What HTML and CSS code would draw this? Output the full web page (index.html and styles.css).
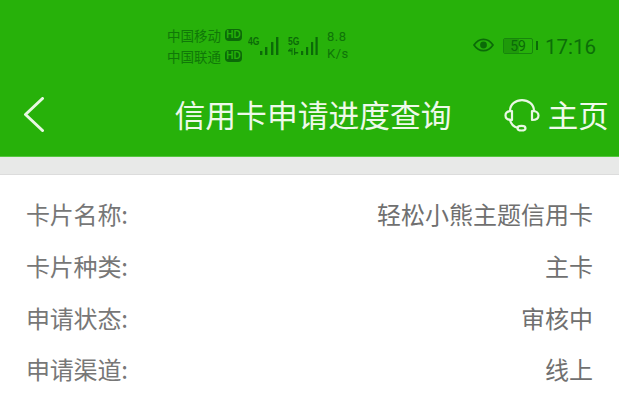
FILE: index.html
```html
<!DOCTYPE html>
<html lang="zh">
<head>
<meta charset="utf-8">
<title>信用卡申请进度查询</title>
<link rel="stylesheet" href="styles.css">
</head>
<body>
<div class="top">
  <div class="status">
    <div class="carriers">
      <div class="carrier"><span>中国移动</span><b class="hd">HD</b></div>
      <div class="carrier"><span>中国联通</span><b class="hd">HD</b></div>
    </div>
    <div class="signal">
      <span class="net">4G</span>
      <svg class="bars" width="20" height="18" viewBox="0 0 20 18"><g fill="#0b6a08"><rect x="0" y="14" width="2.400" height="4"/><rect x="5" y="10" width="2.400" height="8"/><rect x="11" y="5" width="2.400" height="13"/><rect x="16" y="0" width="2.400" height="18"/></g></svg>
    </div>
    <div class="signal second">
      <span class="net">5G</span>
      <svg class="bars wide" width="30" height="18" viewBox="0 0 30 18"><g fill="#0b6a08"><path d="M0 13.500l2.500-2.500v2h1v-2h1v7h-1v-3.500h-3.500zM6 11h1.200v4h3v1.500h-3v1.500H6z"/><rect x="13" y="14" width="2.200" height="4"/><rect x="18" y="10" width="2.200" height="8"/><rect x="23" y="5" width="2.200" height="13"/><rect x="27.500" y="0" width="2.200" height="18"/></g></svg>
    </div>
    <div class="speed"><span>8.8</span><span>K/s</span></div>
    <svg class="eye" width="21" height="14" viewBox="0 0 21 14"><path d="M1 7c2.500-3.800 5.800-5.700 9.500-5.700S17.500 3.200 20 7c-2.500 3.800-5.800 5.700-9.500 5.700S3.500 10.800 1 7z" fill="none" stroke="#0b6a08" stroke-width="1.700"/><circle cx="10.500" cy="7" r="3.400" fill="#0b6a08"/></svg>
    <div class="battery"><div class="cell"><i class="level"></i><span>59</span></div><i class="nub"></i></div>
    <div class="clock">17:16</div>
  </div>
  <div class="nav">
    <svg class="back" width="22" height="36" viewBox="0 0 22 36"><path d="M19.500 1.500 2.500 17.500l17 16" fill="none" stroke="#e9f8e4" stroke-width="3" stroke-linecap="round" stroke-linejoin="round"/></svg>
    <h1 class="title">信用卡申请进度查询</h1>
    <div class="home">
      <svg width="36" height="34" viewBox="0 0 36 34"><g fill="none" stroke="#e9f8e4" stroke-width="2.200" stroke-linecap="round" stroke-linejoin="round"><path d="M6 12C6 5 12 1.200 18 1.200S30 5 30 12"/><path d="M8 12C3.500 12 1.500 14 1.500 16.500S3.500 21 8 21Z"/><path d="M28 12C32.500 12 34.500 14 34.500 16.500S32.500 21 28 21Z"/><path d="M6 21C7 25 10 28 13.500 28.800"/><ellipse cx="17.500" cy="29.200" rx="4" ry="2.300"/></g></svg>
      <span>主页</span>
    </div>
  </div>
</div>
<div class="band"></div>
<main class="list">
  <div class="row"><span class="label">卡片名称:</span><span class="value">轻松小熊主题信用卡</span></div>
  <div class="row"><span class="label">卡片种类:</span><span class="value">主卡</span></div>
  <div class="row"><span class="label">申请状态:</span><span class="value">审核中</span></div>
  <div class="row"><span class="label">申请渠道:</span><span class="value">线上</span></div>
</main>
</body>
</html>
```
FILE: styles.css
```css
* { box-sizing: border-box; margin: 0; padding: 0; }
html, body { height: 100%; overflow: hidden; }
body { width: 619px; background: #fff; font-family: "Noto Sans CJK SC", "Noto Sans", sans-serif; color: #666; }
.top { height: 157px; background: #27b10a; border-bottom: 1px solid #55c63f; }
.status { height: 90px; display: flex; align-items: center; padding: 1px 0 0 167px; color: #0b6a08; }
.carriers { width: 81px; flex: none; display: flex; flex-direction: column; gap: 3px; font-size: 13.500px; line-height: 18px; margin-top: -1px; }
.carrier { display: flex; align-items: center; gap: 4px; white-space: nowrap; }
.carrier span { opacity: .8; }
.hd { width: 17px; height: 12px; border-radius: 4px; background: #0b6a08; color: #27b10a; font: bold 10px/12px "Liberation Sans", sans-serif; text-align: center; }
.signal { display: flex; flex: none; align-items: flex-start; margin-top: 0; }
.second { margin-left: 8px; }
.net { flex: none; width: 12px; font: bold 10px/10px "Liberation Sans", sans-serif; transform: scaleX(.85); transform-origin: left; }
.bars { display: block; flex: none; }
.wide { margin-left: -12px; }
.speed { flex: none; width: 44px; margin-left: 9px; display: flex; flex-direction: column; font: 13px/17px "Roboto", sans-serif; letter-spacing: .5px; opacity: .85; margin-top: -1px; }
.eye { flex: none; margin-left: 102px; margin-top: -1px; }
.battery { flex: none; margin-left: 9px; display: flex; align-items: center; gap: 3px; }
.cell { position: relative; width: 30px; height: 16px; border: 1px solid #17860c; border-radius: 2px; font: 14px/14px "Roboto", sans-serif; text-align: center; overflow: hidden; }
.cell span { position: relative; }
.level { position: absolute; left: 0; top: 0; bottom: 0; width: 15px; background: #1f9a0a; }
.nub { width: 2px; height: 9px; background: #0b6a08; }
.clock { flex: none; margin-left: 7px; font: 20.500px/24px "Roboto", sans-serif; margin-top: 2px; color: #0c6e08; }
.nav { height: 50px; display: flex; align-items: center; color: #f0faec; padding-left: 23px; }
.back { flex: none; }
.title { font-size: 30.800px; font-weight: 400; line-height: 50px; margin-left: 129.500px; margin-top: -3px; white-space: nowrap; color: #eef9ea; }
.home { display: flex; align-items: center; gap: 8px; margin-left: 52px; font-size: 30.500px; line-height: 50px; white-space: nowrap; margin-top: -3px; }
.home svg { flex: none; margin-top: 4px; }
.band { height: 18px; background: #e8e9e8; border-bottom: 1px solid #dcdcdc; }
.list { padding: 13px 26px 0 26px; }
.row { height: 51.700px; display: flex; justify-content: space-between; align-items: center; font-size: 24px; white-space: nowrap; }
.label { color: #777; letter-spacing: -.2px; }
.value { color: #707070; }
```
